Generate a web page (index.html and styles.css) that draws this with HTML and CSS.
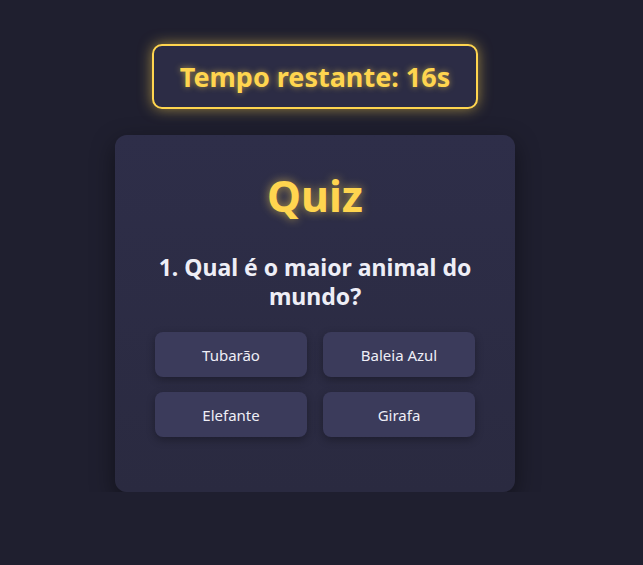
FILE: index.html
```html
<!DOCTYPE html>
<html lang="pt">
<head>
<meta charset="utf-8">
<title>Quiz</title>
<link rel="stylesheet" href="styles.css">
</head>
<body>
<div class="page">
  <div class="timer">Tempo restante: 16s</div>
  <div class="card">
    <h1 class="title">Quiz</h1>
    <h2 class="question">1. Qual é o maior animal do mundo?</h2>
    <div class="options">
      <button class="option">Tubarão</button>
      <button class="option">Baleia Azul</button>
      <button class="option">Elefante</button>
      <button class="option">Girafa</button>
    </div>
  </div>
</div>
</body>
</html>
```
FILE: styles.css
```css
html, body {
  margin: 0;
  padding: 0;
  background: #1f1f2f;
  font-family: "Noto Sans", "Open Sans", sans-serif;
}
.page {
  display: flex;
  flex-direction: column;
  align-items: center;
  padding-top: 44px;
  padding-right: 13px;
}
.timer {
  box-sizing: border-box;
  width: 326px;
  height: 65px;
  display: flex;
  align-items: center;
  justify-content: center;
  border: 2px solid #ffd54f;
  border-radius: 10px;
  background: #2c2c45;
  color: #ffd54f;
  font-size: 27px;
  font-weight: 700;
  box-shadow: 0 0 14px rgba(255, 213, 79, 0.55);
  text-shadow: 0 0 6px rgba(255, 213, 79, 0.6);
}
.card {
  box-sizing: border-box;
  width: 400px;
  height: 357px;
  margin-top: 26px;
  padding: 33px 40px 40px;
  border-radius: 12px;
  background: linear-gradient(180deg, #2e2e49 0%, #2a2a40 100%);
  box-shadow: 0 8px 24px rgba(0, 0, 0, 0.45);
  text-align: center;
}
.title {
  margin: 0;
  font-size: 43px;
  line-height: 56px;
  font-weight: 700;
  color: #ffd54f;
  text-shadow: 0 0 10px rgba(255, 213, 79, 0.6);
}
.question {
  margin: 29px 0 21px;
  font-size: 23px;
  line-height: 29px;
  font-weight: 700;
  color: #eeeef6;
}
.options {
  display: grid;
  grid-template-columns: 1fr 1fr;
  column-gap: 16px;
  row-gap: 15px;
}
.option {
  height: 45px;
  border: none;
  border-radius: 8px;
  background: #3b3b5b;
  color: #eeeef6;
  font-family: inherit;
  font-size: 15px;
  box-shadow: 0 3px 8px rgba(0, 0, 0, 0.3);
}
```
